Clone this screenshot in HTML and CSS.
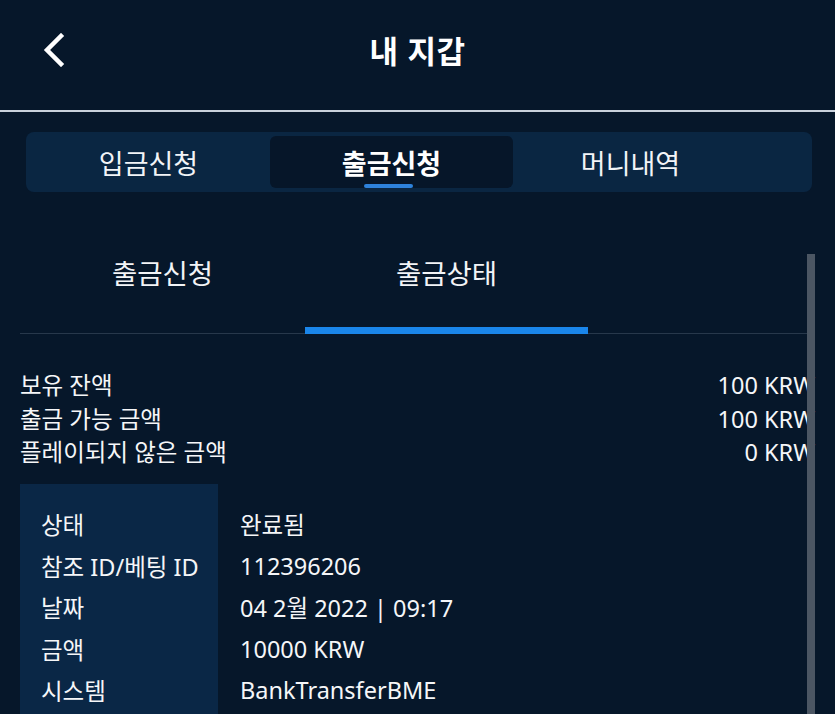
FILE: index.html
```html
<!DOCTYPE html>
<html lang="ko">
<head>
    <meta charset="UTF-8">
    <meta name="viewport" content="width=device-width, initial-scale=1.0">
    <title>내 지갑</title>
    <link rel="stylesheet" href="styles.css">
</head>
<body>
    <div class="wallet">
        <header class="top-bar">
            <button class="back-btn" aria-label="뒤로">
                <svg width="24" height="34" viewBox="0 0 24 34">
                    <path d="M19 3 L5 17 L19 31" fill="none" stroke="#ffffff" stroke-width="4.5" stroke-linecap="square"/>
                </svg>
            </button>
            <h1>내 지갑</h1>
        </header>

        <nav class="segments">
            <div class="segment">입금신청</div>
            <div class="segment active">출금신청</div>
            <div class="segment last">머니내역</div>
        </nav>

        <div class="sub-tabs">
            <div class="sub-tab first">출금신청</div>
            <div class="sub-tab active">출금상태</div>
        </div>

        <div class="content">
            <div class="balances">
                <div class="balance-row"><span>보유 잔액</span><span>100 KRW</span></div>
                <div class="balance-row"><span>출금 가능 금액</span><span>100 KRW</span></div>
                <div class="balance-row"><span>플레이되지 않은 금액</span><span>0 KRW</span></div>
            </div>

            <div class="details">
                <div class="detail-row"><div class="label">상태</div><div class="value">완료됨</div></div>
                <div class="detail-row"><div class="label">참조 ID/베팅 ID</div><div class="value">112396206</div></div>
                <div class="detail-row"><div class="label">날짜</div><div class="value">04 2월 2022 | 09:17</div></div>
                <div class="detail-row"><div class="label">금액</div><div class="value">10000 KRW</div></div>
                <div class="detail-row"><div class="label">시스템</div><div class="value">BankTransferBME</div></div>
            </div>

            <div class="scrollbar"></div>
        </div>
    </div>
</body>
</html>
```

FILE: styles.css
```css
html, body {
    margin: 0;
    padding: 0;
    height: 100%;
    overflow: hidden;
}

body {
    background-color: #06172a;
    color: #ffffff;
    font-family: "Noto Sans CJK KR", "Noto Sans", sans-serif;
}

.wallet {
    position: relative;
    height: 714px;
    overflow: hidden;
}

.top-bar {
    height: 110px;
    display: flex;
    align-items: center;
    justify-content: center;
    position: relative;
    border-bottom: 2px solid #c9d1dc;
}

.top-bar h1 {
    margin: 0 0 12px 0;
    font-size: 31px;
    font-weight: 700;
    letter-spacing: 0.5px;
}

.back-btn {
    position: absolute;
    left: 42px;
    top: 33px;
    background: none;
    border: none;
    padding: 0;
    cursor: pointer;
}

.segments {
    margin: 20px 23px 0 26px;
    height: 60px;
    background-color: #0a2642;
    border-radius: 8px;
    display: flex;
    align-items: center;
    padding: 0 1px;
    box-sizing: border-box;
}

.segment {
    width: 243px;
    height: 52px;
    display: flex;
    align-items: center;
    justify-content: center;
    font-size: 27px;
    font-weight: 400;
    color: #f2f4f7;
    border-radius: 6px;
    position: relative;
}

.segment.last {
    padding-right: 8px;
    box-sizing: border-box;
}

.segment.active {
    background-color: #061629;
    font-weight: 700;
    color: #ffffff;
}

.segment.active::after {
    content: "";
    position: absolute;
    left: 50%;
    bottom: 0;
    width: 49px;
    height: 4px;
    margin-left: -28px;
    border-radius: 2px;
    background-color: #2e82db;
}

.sub-tabs {
    margin: 0 20px;
    display: flex;
    height: 141px;
    border-bottom: 1px solid #27384b;
}

.sub-tab {
    width: 283px;
    display: flex;
    align-items: center;
    justify-content: center;
    padding-top: 18px;
    font-size: 27.5px;
    color: #f2f4f7;
    position: relative;
}

.sub-tab.first {
    width: 285px;
}

.sub-tab.active::after {
    content: "";
    position: absolute;
    left: 0;
    right: 0;
    bottom: -1px;
    height: 7px;
    background-color: #1a86ea;
}

.content {
    padding: 35px 20px 0 20px;
}

.balances {
    font-family: "Noto Sans", "Noto Sans CJK KR", sans-serif;
    font-size: 23.5px;
    line-height: 33.5px;
    color: #f5f6f8;
}

.balance-row {
    display: flex;
    justify-content: space-between;
}

.details {
    margin-top: 14px;
    padding-top: 20px;
    padding-bottom: 30px;
    background: linear-gradient(to right, #0a2746 198px, transparent 198px);
    font-family: "Noto Sans", "Noto Sans CJK KR", sans-serif;
}

.detail-row {
    display: flex;
    height: 41.5px;
    align-items: center;
    font-size: 23.5px;
    color: #f5f6f8;
}

.detail-row .label {
    width: 198px;
    padding-left: 21px;
    box-sizing: border-box;
    white-space: nowrap;
}

.detail-row .value {
    padding-left: 22px;
}

.scrollbar {
    position: absolute;
    right: 20px;
    top: 254px;
    bottom: 0;
    width: 8px;
    background-color: #4b5663;
}
```
